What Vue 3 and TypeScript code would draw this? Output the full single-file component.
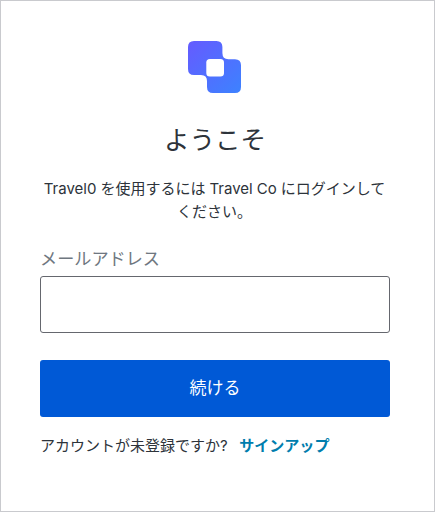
<script setup lang="ts">
import { ref } from 'vue'

const email = ref<string>('')
</script>

<template>
  <main class="card">
    <svg class="logo" width="53" height="52" viewBox="0 0 53 52" aria-hidden="true">
      <defs>
        <linearGradient id="brand" x1="4" y1="2" x2="49" y2="50" gradientUnits="userSpaceOnUse">
          <stop offset="0" stop-color="#635dff" />
          <stop offset="1" stop-color="#3f80ff" />
        </linearGradient>
      </defs>
      <path
        fill="url(#brand)"
        d="M6 0H28.4Q34.4 0 34.4 6V12Q34.4 18.2 40.4 18.2H47Q53 18.2 53 24.2V46Q53 52 47 52H25Q19 52 19 46V40Q19 34 13 34H6Q0 34 0 28V6Q0 0 6 0Z"
      />
      <rect x="18.3" y="18" width="17.7" height="17.6" rx="3.6" fill="#fff" />
    </svg>
    <h1 class="title">ようこそ</h1>
    <p class="intro">Travel0 を使用するには Travel Co にログインしてください。</p>
    <form class="form" @submit.prevent>
      <label class="label" for="email">メールアドレス</label>
      <input id="email" v-model="email" class="field" type="email" />
      <button class="submit" type="submit">続ける</button>
    </form>
    <p class="signup">
      <span>アカウントが未登録ですか?</span>
      <a class="link" href="#">サインアップ</a>
    </p>
  </main>
</template>

<style>
body {
  margin: 0;
}
</style>

<style scoped>
.card {
  box-sizing: border-box;
  height: 512px;
  padding: 40px 44px 0 39px;
  border: 1px solid #c9cace;
  display: flex;
  flex-direction: column;
  background: #fff;
  color: #2d333a;
  font-family: Inter, 'Noto Sans CJK JP', sans-serif;
  font-size: 15px;
}

.logo {
  flex: none;
  align-self: center;
  margin-right: 1px;
}

.title {
  margin: 28px 0 0;
  font-size: 25.5px;
  font-weight: 400;
  line-height: 38px;
  text-align: center;
}

.intro {
  margin: 18px 1px 0 0;
  line-height: 23px;
  text-align: center;
  word-spacing: -0.2px;
}

.form {
  display: flex;
  flex-direction: column;
  margin-top: 25px;
}

.label {
  color: #6f7780;
  font-size: 17.15px;
  line-height: 22px;
}

.field {
  box-sizing: border-box;
  width: 100%;
  height: 57px;
  margin: 6px 0 27px;
  padding: 0 16px;
  border: 1px solid #65676e;
  border-radius: 3px;
  outline: none;
  background: #fff;
  color: inherit;
  font: inherit;
}

.submit {
  height: 57px;
  padding: 0 0 4px;
  border: 0;
  border-radius: 3px;
  background: #0059d6;
  color: #fff;
  font-family: inherit;
  font-size: 17px;
}

.signup {
  display: flex;
  gap: 11.5px;
  margin: 17px 0 0;
  line-height: 23px;
}

.link {
  color: #007dad;
  font-size: 15.05px;
  font-weight: 700;
  text-decoration: none;
}
</style>
